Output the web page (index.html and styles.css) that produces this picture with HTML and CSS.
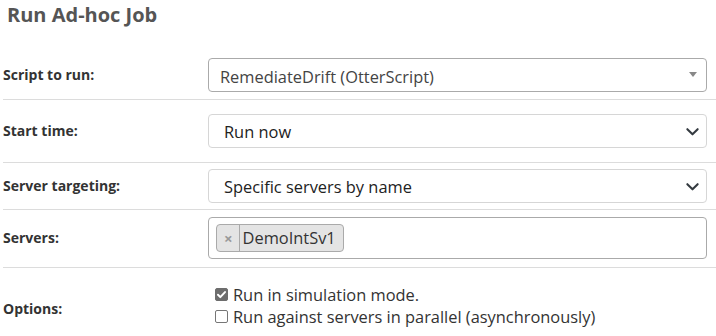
FILE: index.html
```html
<!DOCTYPE html>
<html lang="en">
<head>
<meta charset="utf-8">
<title>Run Ad-hoc Job</title>
<link rel="stylesheet" href="styles.css">
</head>
<body>
<h2 class="page-title">Run Ad-hoc Job</h2>
<form class="job-form">
  <div class="form-row row-script">
    <label class="row-label">Script to run:</label>
    <div class="row-field">
      <div class="select2-box">
        <span class="select2-text">RemediateDrift (OtterScript)</span>
        <span class="select2-arrow"></span>
      </div>
    </div>
  </div>
  <div class="form-row row-start">
    <label class="row-label">Start time:</label>
    <div class="row-field">
      <div class="select-box">
        <span class="select-text">Run now</span>
        <svg class="chevron" viewBox="0 0 16 16" width="14" height="14"><path d="M2.5 5.5l5.5 5.5 5.5-5.5" fill="none" stroke="#343a40" stroke-width="2.2" stroke-linecap="round" stroke-linejoin="round"/></svg>
      </div>
    </div>
  </div>
  <div class="form-row row-target">
    <label class="row-label">Server targeting:</label>
    <div class="row-field">
      <div class="select-box">
        <span class="select-text">Specific servers by name</span>
        <svg class="chevron" viewBox="0 0 16 16" width="14" height="14"><path d="M2.5 5.5l5.5 5.5 5.5-5.5" fill="none" stroke="#343a40" stroke-width="2.2" stroke-linecap="round" stroke-linejoin="round"/></svg>
      </div>
    </div>
  </div>
  <div class="form-row row-servers">
    <label class="row-label">Servers:</label>
    <div class="row-field">
      <div class="multi-box">
        <span class="chip"><span class="chip-remove">×</span><span class="chip-text">DemoIntSv1</span></span>
      </div>
    </div>
  </div>
  <div class="form-row row-options">
    <label class="row-label">Options:</label>
    <div class="row-field options">
      <label class="option"><input type="checkbox" class="check" checked><span>Run in simulation mode.</span></label>
      <label class="option"><input type="checkbox" class="check"><span>Run against servers in parallel (asynchronously)</span></label>
    </div>
  </div>
</form>
</body>
</html>
```
FILE: styles.css
```css
* { box-sizing: border-box; }
html, body { margin: 0; padding: 0; background: #fff; }
body {
  font-family: "Open Sans", "Noto Sans", sans-serif;
  color: #333;
  overflow: hidden;
}
.page-title {
  margin: 1px 0 0 7px;
  font-size: 20px;
  line-height: 27px;
  font-weight: 700;
  color: #555;
}
.job-form {
  margin: 23px 0 0 3px;
}
.form-row {
  display: grid;
  grid-template-columns: 205px 499px;
  align-items: center;
  border-bottom: 1px solid #dcdcdc;
}
.row-script { padding: 7px 0; }
.row-start { padding: 14px 0; }
.row-target { padding: 6px 0; }
.row-servers { padding: 7px 0 8px; }
.row-options { border-bottom: none; }
.row-label {
  font-size: 14px;
  font-weight: 700;
  color: #333;
  line-height: 20px;
}
.row-field { min-width: 0; }

.select2-box {
  height: 34px;
  border: 1px solid #aaa;
  border-radius: 4px;
  display: flex;
  align-items: center;
  padding: 3px 0 0 11px;
  font-size: 16.4px;
  color: #444;
}
.select2-text { flex: 1; }
.select2-arrow {
  width: 0; height: 0;
  border-left: 4px solid transparent;
  border-right: 4px solid transparent;
  border-top: 5px solid #888;
  margin: -4px 9px 0 0;
}
.select-box {
  height: 34px;
  border: 1px solid #d6d6d6;
  border-radius: 4px;
  display: flex;
  align-items: center;
  padding: 0 4px 0 15px;
  font-size: 16.4px;
  color: #222;
}
.select-text { flex: 1; }
.chevron { width: 15px; height: 15px; margin-right: 2px; }

.multi-box {
  height: 42px;
  border: 1px solid #aaa;
  border-radius: 4px;
  display: flex;
  align-items: center;
  padding: 0 7px;
}
.chip {
  display: inline-flex;
  align-items: center;
  height: 28px;
  background: #e4e4e4;
  border: 1px solid #aaa;
  border-radius: 4px;
  font-size: 16.4px;
  color: #333;
}
.chip-remove {
  color: #999;
  font-size: 15px;
  font-weight: 700;
  padding: 0 6px 0 7px;
  border-right: 1px solid #aaa;
  line-height: 26px;
  height: 26px;
}
.chip-text { padding: 0 7px 0 3px; line-height: 26px; }

.options {
  padding: 15px 0 22px;
}
.option {
  display: flex;
  align-items: center;
  height: 22px;
  font-size: 16.4px;
  color: #333;
  padding-left: 7px;
}
.check {
  appearance: none;
  -webkit-appearance: none;
  width: 13px;
  height: 13px;
  margin: 0 5px 0 0;
  border: 1px solid #767676;
  border-radius: 2px;
  background: #fff;
  flex: none;
}
.check:checked {
  border-color: #6d6d6d;
  background: #6d6d6d url("data:image/svg+xml,%3Csvg xmlns='http://www.w3.org/2000/svg' viewBox='0 0 13 13'%3E%3Cpath d='M3 6.8l2.3 2.3 4.7-5' fill='none' stroke='white' stroke-width='2' stroke-linecap='round' stroke-linejoin='round'/%3E%3C/svg%3E") center/13px 13px no-repeat;
}
```
